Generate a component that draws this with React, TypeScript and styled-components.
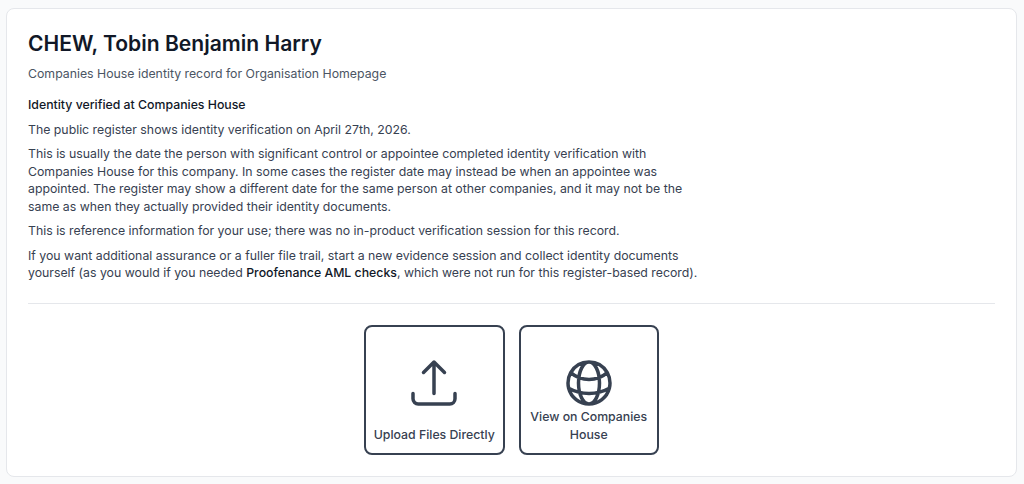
import React from "react";
import styled, { createGlobalStyle } from "styled-components";

const Global = createGlobalStyle`
  html, body { margin: 0; padding: 0; background: #f9fafb; }
  body { font-family: Inter, "Liberation Sans", sans-serif; }
  * { box-sizing: border-box; }
`;
const Page = styled.div`
  width: 1024px; height: 484px; padding: 8px 7px 7px 6px; overflow: hidden;
`;
const Card = styled.section`
  width: 1011px; height: 469px; background: #fff; border: 1px solid #e5e7eb; border-radius: 8px;
  padding: 20.5px 21px 21px;
`;
const Title = styled.h1`
  margin: 0; font-size: 21.07px; line-height: 28px; font-weight: 600; color: #111827;
`;
const Subtitle = styled.p`
  margin: 7px 0 0; font-size: 12.3px; line-height: 17.5px; color: #4b5563;
`;
const Notice = styled.div`
  margin-top: 14px; width: 672px; font-size: 12.3px; line-height: 17.5px; color: #374151;
`;
const Heading = styled.p`
  margin: 0 0 7px; font-weight: 500; color: #111827;
`;
const Para = styled.p`
  margin: 0 0 7px;
  &:last-child { margin-bottom: 0; }
`;
const Strong = styled.strong`
  font-weight: 500; color: #111827;
`;
const Divider = styled.hr`
  margin: 21.5px 0 0; border: 0; border-top: 1px solid #e5e7eb;
`;
const Actions = styled.div`
  display: flex; justify-content: center; gap: 14px; margin-top: 21px;
`;
const Tile = styled.button`
  width: 140.5px; height: 130px; padding: 28px 4px 10.5px; background: #fff; border: 2px solid #374151; border-radius: 8px;
  display: flex; flex-direction: column; align-items: center;
  font: 500 12.3px/17.5px Inter, "Liberation Sans", sans-serif; color: #374151; text-align: center;
`;
const Icon = styled.svg`
  flex: none; width: 56px; height: 56px; fill: none; stroke: #374151; stroke-width: 1.5; stroke-linecap: round; stroke-linejoin: round;
`;
const Label = styled.span`
  flex: none; height: 35px; margin-top: -3px; display: flex; align-items: flex-end; justify-content: center;
`;
const WideLabel = styled(Label)`
  padding: 0 4px;
`;

export default function App() {
  return (
    <Page>
      <Global />
      <Card>
        <Title>CHEW, Tobin Benjamin Harry</Title>
        <Subtitle>Companies House identity record for Organisation Homepage</Subtitle>
        <Notice>
          <Heading>Identity verified at Companies House</Heading>
          <Para>The public register shows identity verification on April 27th, 2026.</Para>
          <Para>This is usually the date the person with significant control or appointee completed identity verification with Companies House for this company. In some cases the register date may instead be when an appointee was appointed. The register may show a different date for the same person at other companies, and it may not be the same as when they actually provided their identity documents.</Para>
          <Para>This is reference information for your use; there was no in-product verification session for this record.</Para>
          <Para>If you want additional assurance or a fuller file trail, start a new evidence session and collect identity documents yourself (as you would if you needed <Strong>Proofenance AML checks</Strong>, which were not run for this register-based record).</Para>
        </Notice>
        <Divider />
        <Actions>
          <Tile>
            <Icon viewBox="0 0 24 24"><path d="M3 16.5v2.25A2.25 2.25 0 0 0 5.25 21h13.5A2.25 2.25 0 0 0 21 18.75V16.5m-13.5-9L12 3m0 0 4.5 4.5M12 3v13.5" /></Icon>
            <Label>Upload Files Directly</Label>
          </Tile>
          <Tile>
            <Icon viewBox="0 0 24 24"><path d="M12 21a9.004 9.004 0 0 0 8.716-6.747M12 21a9.004 9.004 0 0 1-8.716-6.747M12 21c2.485 0 4.5-4.03 4.5-9S14.485 3 12 3m0 18c-2.485 0-4.5-4.03-4.5-9S9.515 3 12 3m0 0a8.997 8.997 0 0 1 7.843 4.582M12 3a8.997 8.997 0 0 0-7.843 4.582m15.686 0A11.953 11.953 0 0 1 12 10.5c-2.998 0-5.74-1.1-7.843-2.918m15.686 0A8.959 8.959 0 0 1 21 12c0 .778-.099 1.533-.284 2.253m0 0A17.919 17.919 0 0 1 12 16.5c-3.162 0-6.133-.815-8.716-2.247m0 0A9.015 9.015 0 0 1 3 12c0-1.605.42-3.113 1.157-4.418" /></Icon>
            <WideLabel>View on Companies House</WideLabel>
          </Tile>
        </Actions>
      </Card>
    </Page>
  );
}
